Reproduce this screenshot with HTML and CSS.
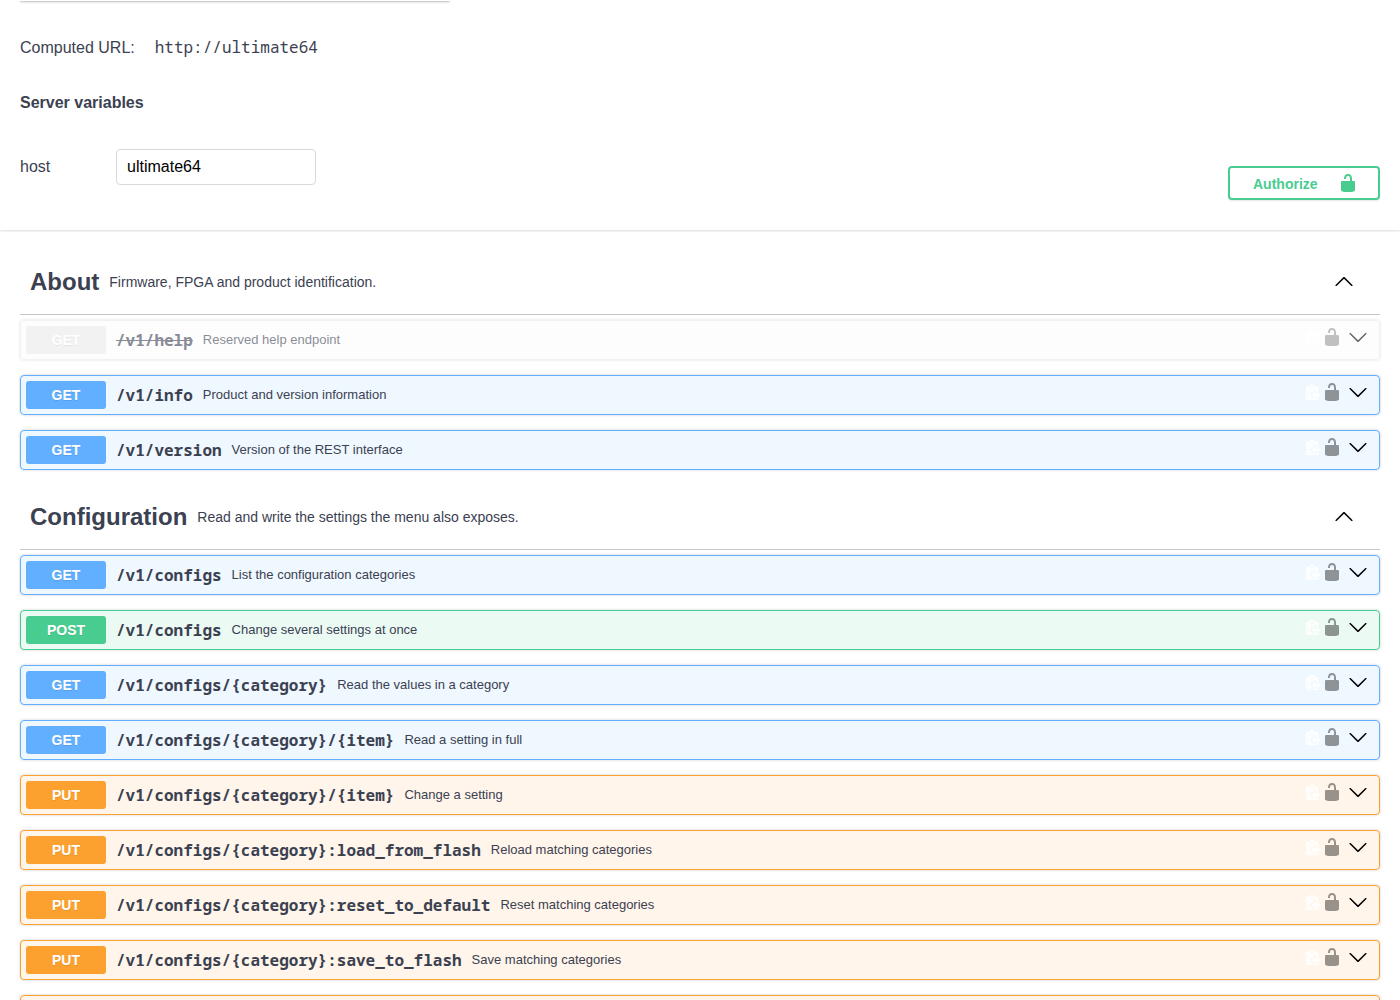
FILE: index.html
```html
<!DOCTYPE html>
<html lang="en">
<head>
  <meta charset="UTF-8">
  <title>Ultimate 64 REST API</title>
  <link rel="stylesheet" href="styles.css">
</head>
<body>
  <svg class="sprites" width="0" height="0">
    <symbol id="lock" viewBox="0 0 20 20"><path d="M15.8 8H14V5.6C14 2.703 12.665 1 10 1 7.334 1 6 2.703 6 5.6V6h2v-.801C8 3.754 8.797 3 10 3c1.203 0 2 .754 2 2.199V8H4c-.553 0-1 .646-1 1.199V17c0 .549.428 1.139.951 1.307l1.197.387C5.672 18.861 6.55 19 7.1 19h5.8c.549 0 1.428-.139 1.951-.307l1.196-.387c.524-.167.953-.757.953-1.306V9.199C17 8.646 16.352 8 15.8 8z"/></symbol>
    <symbol id="arrow" viewBox="0 0 20 20"><path d="M17.418 6.109c.272-.268.709-.268.979 0s.271.701 0 .969l-7.908 7.83c-.27.268-.707.268-.979 0l-7.908-7.83c-.27-.268-.27-.701 0-.969.271-.268.709-.268.979 0L10 13.25l7.418-7.141z"/></symbol>
    <symbol id="copy" viewBox="0 0 16 16"><path fill-rule="evenodd" d="M2 13h4v1H2v-1zm5-6H2v1h5V7zm2 3V8l-3 3 3 3v-2h5v-2H9zM4.5 9H2v1h2.5V9zM2 12h2.5v-1H2v1zm9 1h1v2c-.02.28-.11.52-.3.7-.19.18-.42.28-.7.3H1c-.55 0-1-.45-1-1V4c0-.55.45-1 1-1h3c0-1.11.89-2 2-2 1.11 0 2 .89 2 2h3c.55 0 1 .45 1 1v5h-1V6H1v9h10v-2zM2 5h8c0-.55-.45-1-1-1H8c-.55 0-1-.45-1-1s-.45-1-1-1-1 .45-1 1-.45 1-1 1H3c-.55 0-1 .45-1 1z"/></symbol>
  </svg>

  <div class="servers-bar"></div>

  <div class="scheme">
    <div class="servers">
      <div class="computed"><span>Computed URL:</span><code>http://ultimate64</code></div>
      <h4>Server variables</h4>
      <div class="variable">
        <label for="host">host</label>
        <input id="host" type="text" value="ultimate64">
      </div>
    </div>
    <button class="authorize"><span>Authorize</span><svg><use href="#lock"/></svg></button>
  </div>

  <div class="tags">
    <section>
      <h3 class="tag"><span class="tag-name">About</span><small>Firmware, FPGA and product identification.</small><svg class="up"><use href="#arrow"/></svg></h3>
      <div class="op deprecated"><span class="method">GET</span><span class="path">/v1/help</span><span class="desc">Reserved help endpoint</span><span class="icons"><svg class="copy"><use href="#copy"/></svg><svg class="lock"><use href="#lock"/></svg><svg class="arrow"><use href="#arrow"/></svg></span></div>
      <div class="op get"><span class="method">GET</span><span class="path">/v1/info</span><span class="desc">Product and version information</span><span class="icons"><svg class="copy"><use href="#copy"/></svg><svg class="lock"><use href="#lock"/></svg><svg class="arrow"><use href="#arrow"/></svg></span></div>
      <div class="op get"><span class="method">GET</span><span class="path">/v1/version</span><span class="desc">Version of the REST interface</span><span class="icons"><svg class="copy"><use href="#copy"/></svg><svg class="lock"><use href="#lock"/></svg><svg class="arrow"><use href="#arrow"/></svg></span></div>
    </section>
    <section>
      <h3 class="tag"><span class="tag-name">Configuration</span><small>Read and write the settings the menu also exposes.</small><svg class="up"><use href="#arrow"/></svg></h3>
      <div class="op get"><span class="method">GET</span><span class="path">/v1/configs</span><span class="desc">List the configuration categories</span><span class="icons"><svg class="copy"><use href="#copy"/></svg><svg class="lock"><use href="#lock"/></svg><svg class="arrow"><use href="#arrow"/></svg></span></div>
      <div class="op post"><span class="method">POST</span><span class="path">/v1/configs</span><span class="desc">Change several settings at once</span><span class="icons"><svg class="copy"><use href="#copy"/></svg><svg class="lock"><use href="#lock"/></svg><svg class="arrow"><use href="#arrow"/></svg></span></div>
      <div class="op get"><span class="method">GET</span><span class="path">/v1/configs/{category}</span><span class="desc">Read the values in a category</span><span class="icons"><svg class="copy"><use href="#copy"/></svg><svg class="lock"><use href="#lock"/></svg><svg class="arrow"><use href="#arrow"/></svg></span></div>
      <div class="op get"><span class="method">GET</span><span class="path">/v1/configs/{category}/{item}</span><span class="desc">Read a setting in full</span><span class="icons"><svg class="copy"><use href="#copy"/></svg><svg class="lock"><use href="#lock"/></svg><svg class="arrow"><use href="#arrow"/></svg></span></div>
      <div class="op put"><span class="method">PUT</span><span class="path">/v1/configs/{category}/{item}</span><span class="desc">Change a setting</span><span class="icons"><svg class="copy"><use href="#copy"/></svg><svg class="lock"><use href="#lock"/></svg><svg class="arrow"><use href="#arrow"/></svg></span></div>
      <div class="op put"><span class="method">PUT</span><span class="path">/v1/configs/{category}:load_from_flash</span><span class="desc">Reload matching categories</span><span class="icons"><svg class="copy"><use href="#copy"/></svg><svg class="lock"><use href="#lock"/></svg><svg class="arrow"><use href="#arrow"/></svg></span></div>
      <div class="op put"><span class="method">PUT</span><span class="path">/v1/configs/{category}:reset_to_default</span><span class="desc">Reset matching categories</span><span class="icons"><svg class="copy"><use href="#copy"/></svg><svg class="lock"><use href="#lock"/></svg><svg class="arrow"><use href="#arrow"/></svg></span></div>
      <div class="op put"><span class="method">PUT</span><span class="path">/v1/configs/{category}:save_to_flash</span><span class="desc">Save matching categories</span><span class="icons"><svg class="copy"><use href="#copy"/></svg><svg class="lock"><use href="#lock"/></svg><svg class="arrow"><use href="#arrow"/></svg></span></div>
      <div class="op put"></div>
    </section>
  </div>
</body>
</html>
```

FILE: styles.css
```css
html, body {
  height: 1000px;
  overflow: hidden;
}
body {
  margin: 0;
  background-color: #fff;
  color: #3b4151;
  font-family: "Liberation Sans", Arial, sans-serif;
}
.sprites {
  display: block;
}

.servers-bar {
  width: 430px;
  height: 1px;
  margin-left: 20px;
  border-radius: 0 0 4px 4px;
  box-shadow: 0 1px 2px rgba(0, 0, 0, 0.4);
}

.scheme {
  display: flex;
  justify-content: space-between;
  align-items: flex-end;
  height: 230px;
  margin-top: -1px;
  padding: 0 20px 30px;
  box-sizing: border-box;
  box-shadow: 0 1px 2px 0 rgba(0, 0, 0, 0.15);
}
.servers {
  margin-bottom: 15px;
}
.computed {
  display: flex;
  align-items: flex-start;
  gap: 20px;
  font-size: 16px;
  line-height: 20px;
  margin-bottom: 35px;
}
.computed code {
  font-family: "Noto Sans Mono", monospace;
  font-size: 16px;
  line-height: 18px;
}
.servers h4 {
  margin: 0 0 36px;
  font-size: 16px;
  line-height: 20px;
}
.variable {
  display: flex;
  align-items: center;
  font-size: 16px;
}
.variable label {
  width: 96px;
}
.variable input {
  width: 200px;
  height: 36px;
  box-sizing: border-box;
  padding: 0 10px;
  border: 1px solid #d9d9d9;
  border-radius: 4px;
  font-family: "Liberation Sans", Arial, sans-serif;
  font-size: 16px;
  color: #000;
}
.authorize {
  display: flex;
  align-items: center;
  justify-content: space-between;
  width: 152px;
  height: 34px;
  padding: 0 20px 0 23px;
  background: none;
  border: 2px solid #49cc90;
  border-radius: 4px;
  box-shadow: 0 1px 2px rgba(0, 0, 0, 0.1);
  color: #49cc90;
  font-family: "Liberation Sans", Arial, sans-serif;
  font-size: 14px;
  font-weight: 700;
}
.authorize span {
  margin-top: 2px;
}
.authorize svg {
  width: 20px;
  height: 20px;
  fill: #49cc90;
}

.tags {
  padding: 20px 20px 0;
}
.tag {
  display: flex;
  align-items: center;
  height: 64px;
  margin: 0 0 5px;
  padding: 0 26px 0 10px;
  border-bottom: 1px solid rgba(59, 65, 81, 0.3);
  box-sizing: content-box;
}
.tag-name {
  font-size: 24px;
}
.tag small {
  flex: 1;
  padding-left: 10px;
  font-size: 14px;
  font-weight: 400;
}
.tag svg {
  width: 20px;
  height: 20px;
  transform: rotate(180deg);
}

.op {
  display: flex;
  align-items: center;
  height: 40px;
  margin-bottom: 15px;
  padding: 0 5px;
  box-sizing: border-box;
  border: 1px solid;
  border-radius: 4px;
  box-shadow: 0 0 3px rgba(0, 0, 0, 0.19);
}
.get {
  background-color: rgba(97, 175, 254, 0.1);
  border-color: #61affe;
}
.post {
  background-color: rgba(73, 204, 144, 0.1);
  border-color: #49cc90;
}
.put {
  background-color: rgba(252, 161, 48, 0.1);
  border-color: #fca130;
}
.deprecated {
  background-color: rgba(235, 235, 235, 0.1);
  border-color: #ebebeb;
  opacity: 0.6;
}
.method {
  width: 80px;
  height: 28px;
  flex: none;
  border-radius: 3px;
  color: #fff;
  font-size: 14px;
  font-weight: 700;
  line-height: 28px;
  text-align: center;
  text-shadow: 0 1px 0 rgba(0, 0, 0, 0.1);
}
.get .method { background-color: #61affe; }
.post .method { background-color: #49cc90; }
.put .method { background-color: #fca130; }
.deprecated .method { background-color: #ebebeb; }

.path {
  padding: 0 10px;
  font-family: "Noto Sans Mono", monospace;
  font-size: 16px;
  font-weight: 700;
}
.deprecated .path {
  text-decoration: line-through;
}
.desc {
  flex: 1;
  margin-bottom: 2px;
  font-size: 13px;
}
.icons {
  display: flex;
  align-self: flex-start;
  margin: 6px 6px 0 0;
}
.icons .copy {
  width: 16px;
  height: 16px;
  margin-top: 2px;
  fill: #fff;
  stroke: #fff;
  stroke-width: 0.8;
}
.icons .lock {
  width: 20px;
  height: 20px;
  margin-right: 6px;
  fill: #000;
  opacity: 0.4;
}
.icons .arrow {
  width: 20px;
  height: 20px;
  fill: #000;
}
```
